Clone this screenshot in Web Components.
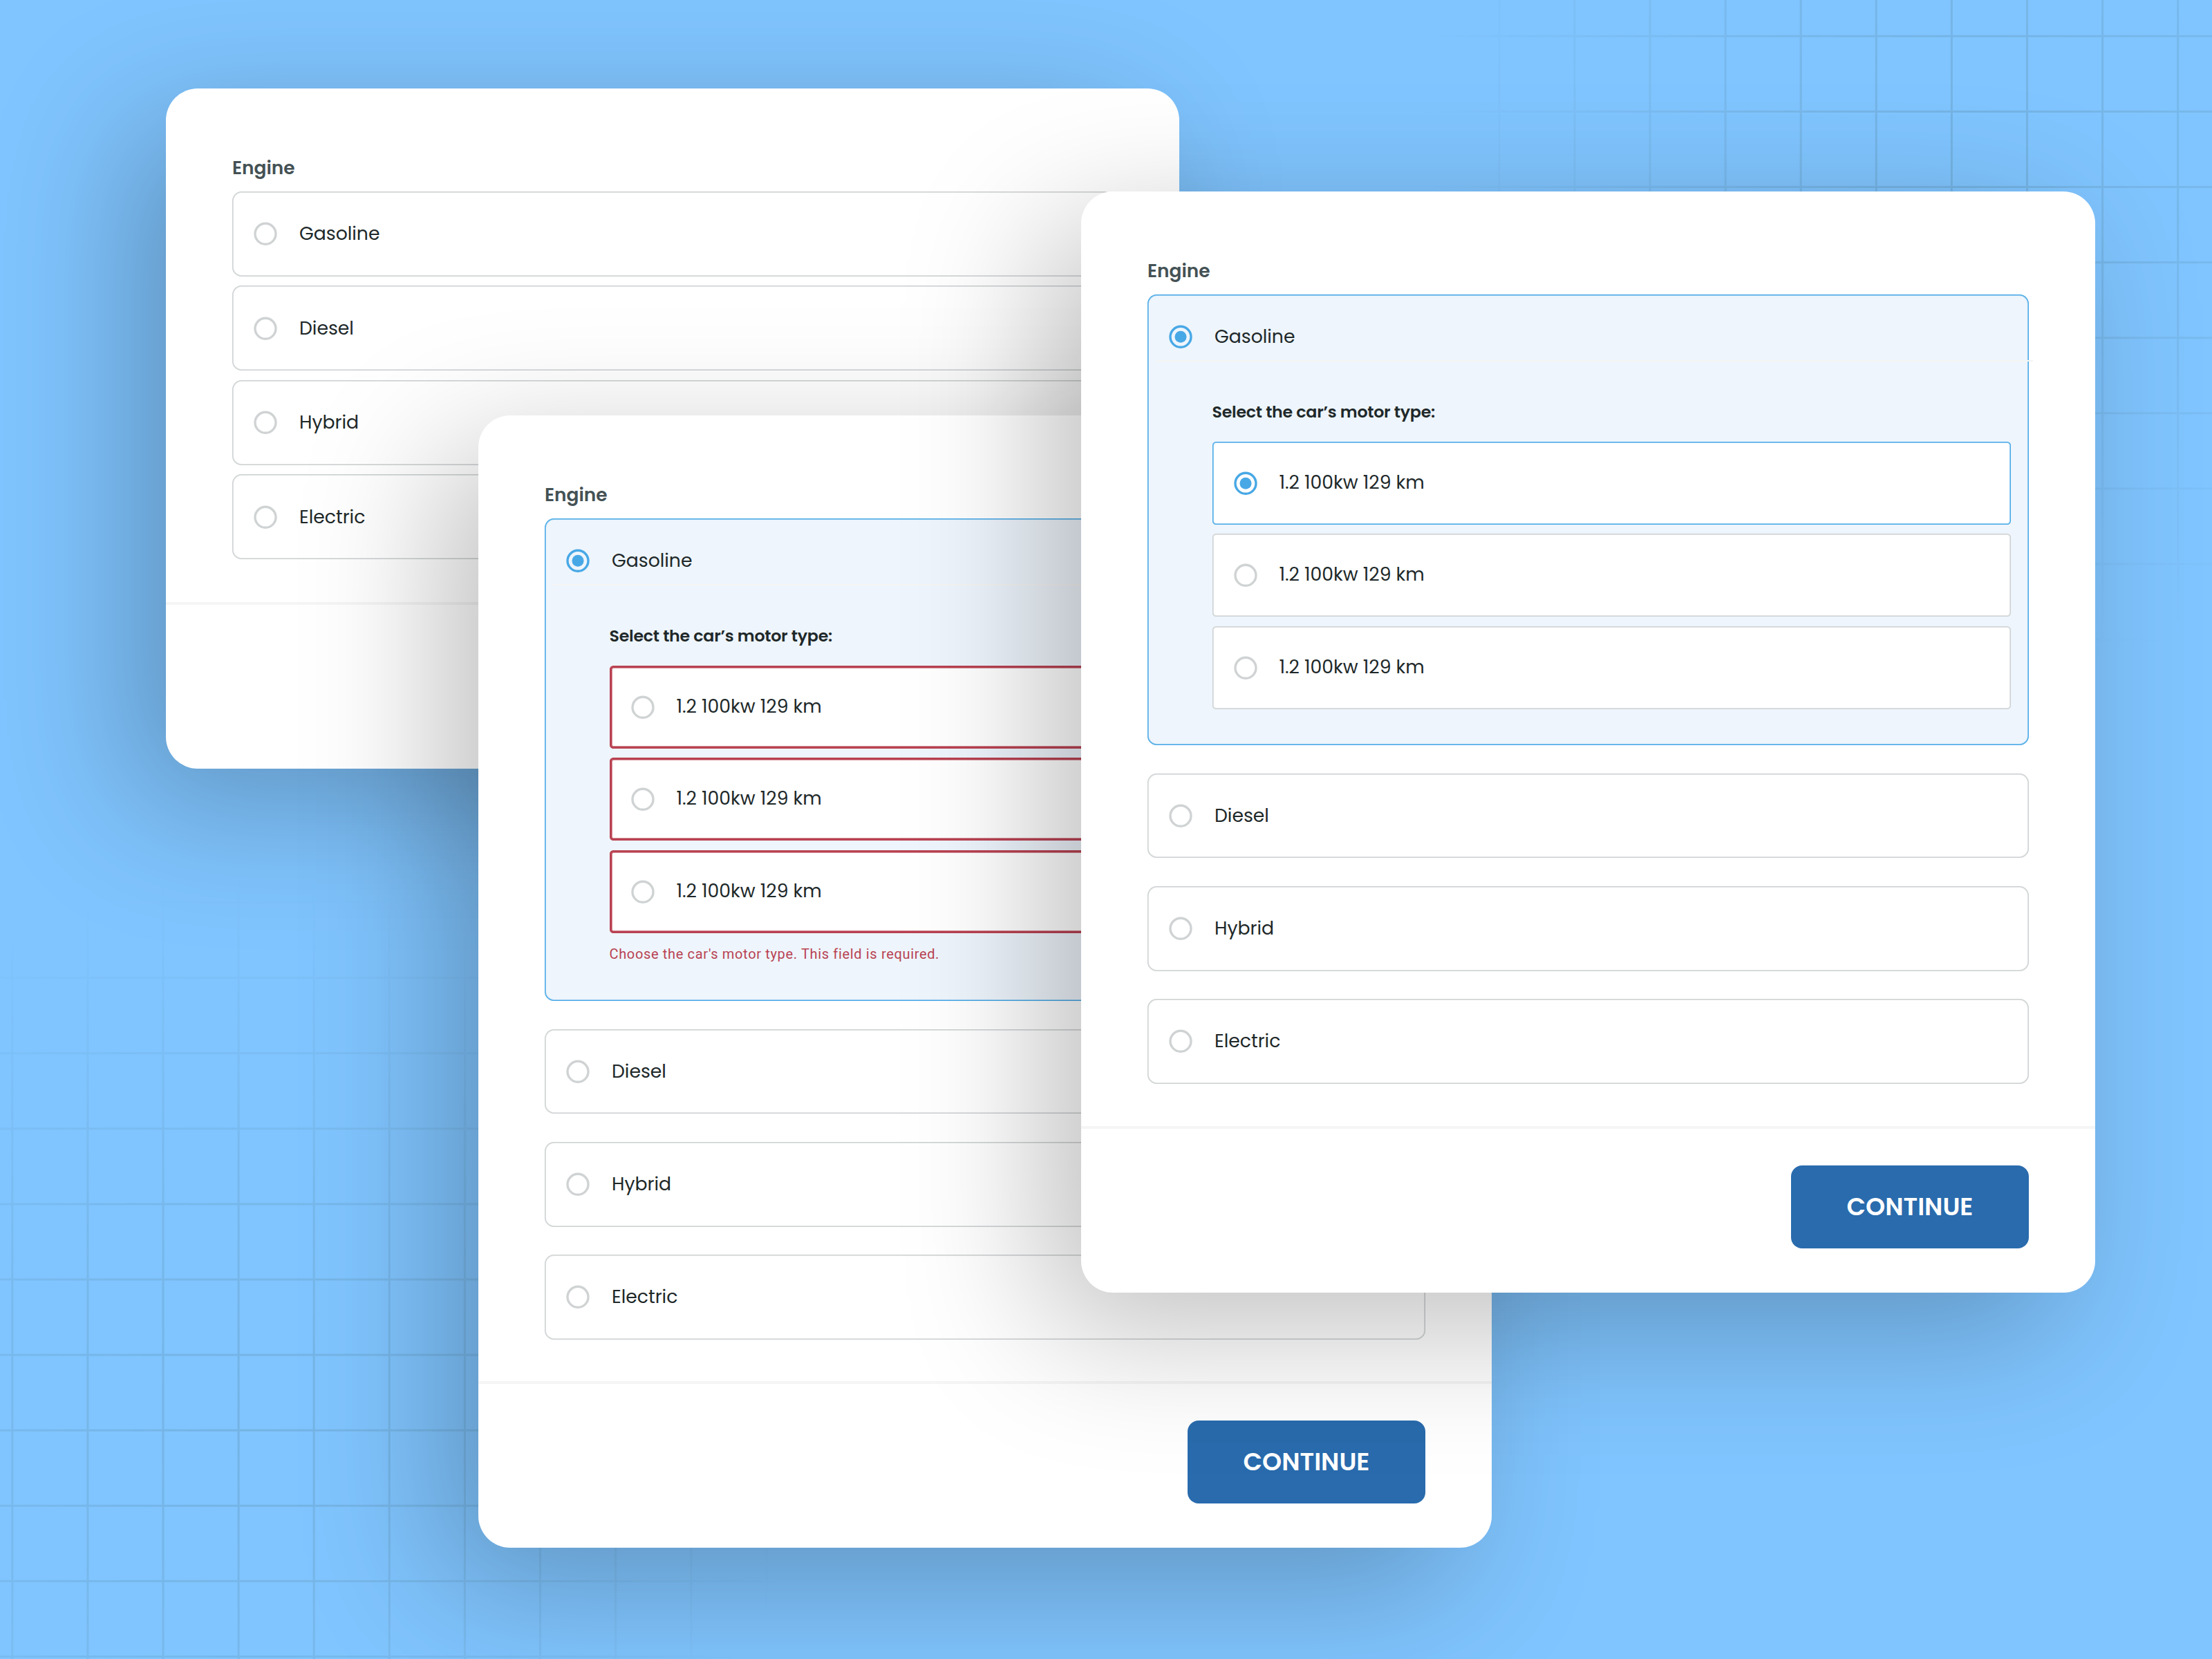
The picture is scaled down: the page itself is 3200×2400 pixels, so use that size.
<!DOCTYPE html>
<html lang="en">
<head>
<meta charset="utf-8">
<title>Engine form</title>
<style>
body {
  margin: 0;
  overflow: hidden;
  font-family: Poppins, Inter, "Liberation Sans", sans-serif;
  color: #202829;
}
engine-card {
  position: absolute;
}
</style>
</head>
<body>
<engine-canvas>
  <engine-card style="left: 240px; top: 128px; height: 984px; --gap: 13.8px">
    <radio-field>Gasoline</radio-field>
    <radio-field>Diesel</radio-field>
    <radio-field>Hybrid</radio-field>
    <radio-field>Electric</radio-field>
  </engine-card>

  <engine-card style="left: 692px; top: 601px; height: 1638px">
    <radio-field checked>Gasoline
      <motor-select slot="details" error="Choose the car's motor type. This field is required.">
        <radio-field inner error>1.2 100kw 129 km</radio-field>
        <radio-field inner error>1.2 100kw 129 km</radio-field>
        <radio-field inner error>1.2 100kw 129 km</radio-field>
      </motor-select>
    </radio-field>
    <radio-field>Diesel</radio-field>
    <radio-field>Hybrid</radio-field>
    <radio-field>Electric</radio-field>
    <action-button slot="footer">CONTINUE</action-button>
  </engine-card>

  <engine-card style="left: 1564px; top: 277px; height: 1593px; width: 1467px">
    <radio-field checked>Gasoline
      <motor-select slot="details">
        <radio-field inner checked>1.2 100kw 129 km</radio-field>
        <radio-field inner>1.2 100kw 129 km</radio-field>
        <radio-field inner>1.2 100kw 129 km</radio-field>
      </motor-select>
    </radio-field>
    <radio-field>Diesel</radio-field>
    <radio-field>Hybrid</radio-field>
    <radio-field>Electric</radio-field>
    <action-button slot="footer">CONTINUE</action-button>
  </engine-card>
</engine-canvas>

<script>
const define = (name, html, setup) => {
  const template = document.createElement('template');
  template.innerHTML = html;
  customElements.define(name, class extends HTMLElement {
    constructor() {
      super();
      this.root = this.attachShadow({ mode: 'open' });
      this.root.appendChild(template.content.cloneNode(true));
    }

    connectedCallback() {
      setup && setup(this, this.root);
    }
  });
};

// Blue backdrop with two fading grids
define('engine-canvas', `
<style>
:host {
  display: block;
  position: relative;
  width: 3200px;
  height: 2400px;
  overflow: hidden;
  background: #80c5ff;
}
svg {
  position: absolute;
  left: 0;
  top: 0;
}
</style>
<svg width="3200" height="2400">
  <defs>
    <pattern id="gridA" width="109.1" height="109.1" patternUnits="userSpaceOnUse" x="16.3" y="1413.1">
      <path d="M1.5 0V109.1M0 1.5H109.1" stroke="#56879c" stroke-width="3" fill="none"/>
    </pattern>
    <pattern id="gridB" width="109.1" height="109.1" patternUnits="userSpaceOnUse" x="2167.3" y="50.8">
      <path d="M1.5 0V109.1M0 1.5H109.1" stroke="#56879c" stroke-width="3" fill="none"/>
    </pattern>
    <radialGradient id="fade">
      <stop offset="0" stop-color="#fff" stop-opacity=".29"/>
      <stop offset=".4" stop-color="#fff" stop-opacity=".21"/>
      <stop offset="1" stop-color="#fff" stop-opacity="0"/>
    </radialGradient>
    <mask id="maskA" maskUnits="userSpaceOnUse" x="0" y="0" width="3200" height="2400" style="mask-type: alpha">
      <circle cx="370" cy="2060" r="790" fill="url(#fade)"/>
    </mask>
    <mask id="maskB" maskUnits="userSpaceOnUse" x="0" y="0" width="3200" height="2400" style="mask-type: alpha">
      <circle cx="2850" cy="190" r="790" fill="url(#fade)"/>
    </mask>
  </defs>
  <rect width="1300" height="1200" y="1200" fill="url(#gridA)" mask="url(#maskA)"/>
  <rect width="1200" height="1100" x="2000" fill="url(#gridB)" mask="url(#maskB)"/>
</svg>
<slot></slot>`);

define('engine-card', `
<style>
:host {
  display: flex;
  flex-direction: column;
  box-sizing: border-box;
  width: 1466px;
  border-radius: 46px;
  background: #fff;
  box-shadow: -53px 53px 200px rgba(0, 0, 0, .25);
}
h2 {
  margin: 0 0 16px;
  font-size: 26.4px;
  line-height: 36px;
  font-weight: 600;
  color: #445154;
}
.body {
  padding: 97px 96px 0;
}
.list {
  display: flex;
  flex-direction: column;
  gap: var(--gap, 40.5px);
}
.footer {
  display: flex;
  justify-content: flex-end;
  box-sizing: border-box;
  height: 241px;
  margin-top: auto;
  padding: 53px 96px 0 0;
  border-top: 4px solid #f5f5f5;
}
</style>
<div class="body">
  <h2>Engine</h2>
  <div class="list"><slot></slot></div>
</div>
<div class="footer"><slot name="footer"></slot></div>`);

define('radio-field', `
<style>
:host {
  --line: #cdd1d2;
  --dot: #d0d3d4;
  --border: 1px;
  --soft: 2px;
  display: block;
  border-radius: 13.6px;
  background: #fff;
  box-shadow: inset 0 0 0 var(--border) var(--line),
    inset 0 0 0 var(--soft) color-mix(in srgb, var(--line) 60%, transparent);
}
:host([inner]) {
  border-radius: 5.5px;
}
:host([checked]) {
  --line: #48a8e6;
  --dot: #48a8e6;
}
:host([checked]:not([inner])) {
  background: #eef5fc;
}
:host([error]) {
  --line: #b94252;
  --border: 3px;
  --soft: 4px;
}
.row {
  display: flex;
  align-items: center;
  height: 122.7px;
  padding-left: 31.3px;
  font-size: 26.67px;
  line-height: 36px;
}
:host([inner]) .row {
  height: 119.9px;
}
svg {
  flex: none;
  width: 34px;
  height: 34px;
  margin-right: 31.7px;
}
.ring {
  fill: none;
  stroke: var(--dot);
  stroke-width: 3.4;
}
.dot {
  display: none;
  fill: var(--dot);
}
:host([checked]) .dot {
  display: block;
}
.label {
  white-space: nowrap;
}
:host([inner]) .label {
  padding-bottom: 2px;
}
</style>
<div class="row">
  <svg viewBox="0 0 34 34"><circle class="ring" cx="17" cy="17.3" r="15"/><circle class="dot" cx="17" cy="17.3" r="8.5"/></svg>
  <span class="label"><slot></slot></span>
</div>
<slot name="details"></slot>`);

define('motor-select', `
<style>
:host {
  display: block;
  box-sizing: border-box;
  padding: 0 26.5px 52.5px 93.5px;
}
.rule {
  height: 2px;
  margin: -27.5px -32px 56px -82px;
  background: #f4f5f3;
}
h3 {
  margin: 0 0 26px;
  font-size: 23.7px;
  line-height: 34px;
  font-weight: 600;
  letter-spacing: -.24px;
}
.list {
  display: flex;
  flex-direction: column;
  gap: 13.4px;
}
.error {
  font: 20px/28px Roboto, sans-serif;
  letter-spacing: .66px;
  color: #b94252;
  margin: 16px 0 2px;
}
.error:empty {
  display: none;
}
</style>
<div class="rule"></div>
<h3>Select the car’s motor type:</h3>
<div class="list"><slot></slot></div>
<div class="error"></div>`, (el, root) => {
  root.querySelector('.error').textContent = el.getAttribute('error') || '';
});

define('action-button', `
<style>
:host {
  display: flex;
  align-items: center;
  justify-content: center;
  box-sizing: border-box;
  width: 344px;
  height: 120.4px;
  padding-bottom: 2px;
  border-radius: 16px;
  background: #296bad;
  color: #fff;
  font-size: 35.8px;
  font-weight: 600;
}
</style>
<slot></slot>`);
</script>
</body>
</html>
